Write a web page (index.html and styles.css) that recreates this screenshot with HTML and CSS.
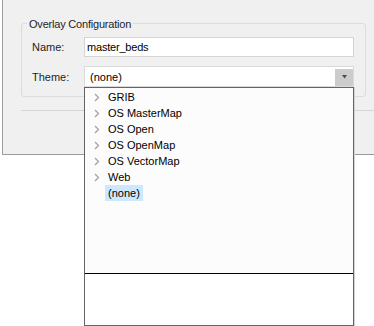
FILE: index.html
```html
<!DOCTYPE html>
<html>
<head>
  <title>Overlay Configuration</title>
  <link rel="stylesheet" href="styles.css">
</head>

<body>
  <div class="window">
    <fieldset class="group">
      <legend>Overlay Configuration</legend>
      <div class="row">
        <label for="name-input">Name:</label>
        <input type="text" id="name-input" value="master_beds">
      </div>
      <div class="row">
        <label>Theme:</label>
        <div class="combo">
          <span class="combo-text">(none)</span>
          <span class="combo-button">
            <svg width="5" height="4" viewBox="0 0 5 4"><polygon points="0,0 5,0 2.5,3.5" fill="#4d4d4d"/></svg>
          </span>
        </div>
      </div>
    </fieldset>
    <div class="separator"></div>
  </div>

  <!-- theme picker popup, open over the form -->
  <div class="dropdown">
    <ul class="tree">
      <li><svg class="chevron" width="6" height="9" viewBox="0 0 6 9"><polyline points="1,1 4.5,4.5 1,8" fill="none" stroke="#a6a6a6" stroke-width="1.4"/></svg>GRIB</li>
      <li><svg class="chevron" width="6" height="9" viewBox="0 0 6 9"><polyline points="1,1 4.5,4.5 1,8" fill="none" stroke="#a6a6a6" stroke-width="1.4"/></svg>OS MasterMap</li>
      <li><svg class="chevron" width="6" height="9" viewBox="0 0 6 9"><polyline points="1,1 4.5,4.5 1,8" fill="none" stroke="#a6a6a6" stroke-width="1.4"/></svg>OS Open</li>
      <li><svg class="chevron" width="6" height="9" viewBox="0 0 6 9"><polyline points="1,1 4.5,4.5 1,8" fill="none" stroke="#a6a6a6" stroke-width="1.4"/></svg>OS OpenMap</li>
      <li><svg class="chevron" width="6" height="9" viewBox="0 0 6 9"><polyline points="1,1 4.5,4.5 1,8" fill="none" stroke="#a6a6a6" stroke-width="1.4"/></svg>OS VectorMap</li>
      <li><svg class="chevron" width="6" height="9" viewBox="0 0 6 9"><polyline points="1,1 4.5,4.5 1,8" fill="none" stroke="#a6a6a6" stroke-width="1.4"/></svg>Web</li>
      <li class="leaf"><span class="selected">(none)</span></li>
    </ul>
    <div class="details"></div>
  </div>
</body>
</html>
```

FILE: styles.css
```css
body {
  margin: 0;
  background-color: #fff;
  font-family: "Liberation Sans", Arial, sans-serif;
  font-size: 11px;
  color: #000;
}

.window {
  margin-left: 2px;
  padding-top: 15px;
  box-sizing: border-box;
  height: 155px;
  background-color: #f0f0f0;
  border-left: 1px solid #a0a0a0;
  border-bottom: 1px solid #999;
}

.group {
  width: 345px;
  box-sizing: border-box;
  margin: 0 0 0 18px;
  padding: 6px 11px 9px 10px;
  border: 1px solid #dcdcdc;
  border-radius: 3px;
}

.group legend {
  margin-left: -5px;
  padding: 3px 2px 0;
  line-height: 13px;
  color: #1e1e1e;
  letter-spacing: -0.2px;
}

.row {
  display: flex;
  align-items: center;
  margin-bottom: 9px;
}

.row:last-child {
  margin-bottom: 0;
}

label {
  width: 52px;
  color: #1e1e1e;
}

input[type="text"] {
  width: 270px;
  height: 20px;
  box-sizing: border-box;
  margin: 0;
  padding: 0 2px;
  border: 1px solid #d4d4d4;
  background-color: #fff;
  font-family: inherit;
  font-size: 11px;
  letter-spacing: -0.2px;
  color: #000;
  outline: none;
}

.combo {
  width: 270px;
  height: 21px;
  box-sizing: border-box;
  display: flex;
  align-items: center;
  justify-content: space-between;
  border: 1px solid #dadada;
  background-color: #fff;
}

.combo-text {
  padding-left: 5px;
}

.combo-button {
  width: 18px;
  height: 17px;
  margin-top: 1px;
  display: flex;
  align-items: center;
  justify-content: center;
  background-color: #cccccc;
}

.separator {
  margin: 13px 0 0 18px;
  border-top: 1px solid #d5d5d5;
}

.dropdown {
  position: absolute;
  left: 84px;
  top: 87px;
  width: 270px;
  height: 239px;
  box-sizing: border-box;
  border: 1px solid #646464;
  background-color: #fcfcfc;
  box-shadow: 1px 0 0 #d4d4d4;
}

.tree {
  list-style: none;
  margin: 0;
  padding: 1px 0 0;
  box-sizing: border-box;
  height: 186px;
  border-bottom: 1px solid #000;
}

.tree li {
  height: 16px;
  display: flex;
  align-items: center;
  padding-left: 9px;
}

.chevron {
  margin-right: 8px;
}

.tree li.leaf {
  padding-left: 20px;
}

.selected {
  padding: 0 3px;
  line-height: 16px;
  background-color: #cce8ff;
}

.details {
  height: 51px;
  background-color: #fff;
}
```
